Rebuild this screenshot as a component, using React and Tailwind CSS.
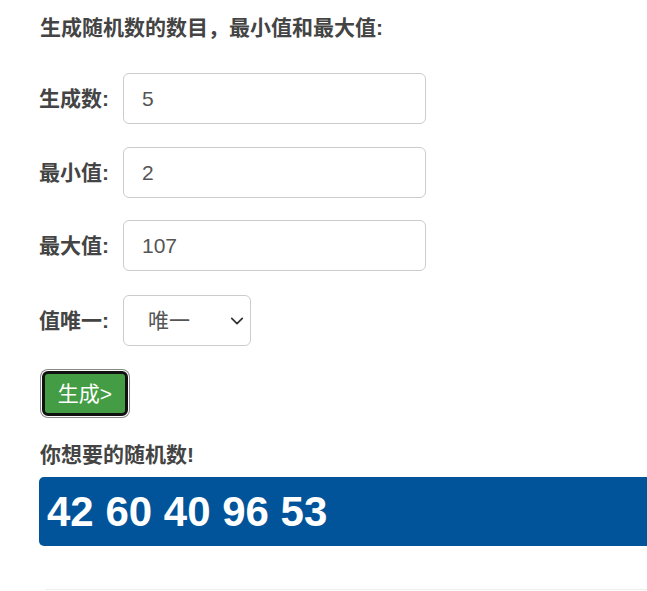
import React from "react";

const ff = { fontFamily: '"Liberation Sans", "Noto Sans CJK SC", sans-serif' };

function Row({ label, children, className = "" }) {
  return (
    <div className={"flex items-center " + className}>
      <label className="w-[84px] shrink-0 text-[21px] font-bold leading-[28px] text-[#444]">{label}</label>
      {children}
    </div>
  );
}

function TextInput({ value }) {
  return (
    <div className="flex h-[51px] w-[303px] items-center rounded-[6px] border border-[#ccc] bg-white px-[18px] text-[21px] text-[#555]">
      {value}
    </div>
  );
}

export default function App() {
  return (
    <div
      className="flex h-[591px] w-[647px] flex-col overflow-hidden bg-white pl-[39px]"
      style={ff}
    >
      <div className="mt-[14px] h-[28px] pl-[1px] text-[21px] font-bold leading-[28px] text-[#444]">
        生成随机数的数目，最小值和最大值:
      </div>

      <Row label="生成数:" className="mt-[31px]">
        <TextInput value="5" />
      </Row>
      <Row label="最小值:" className="mt-[23px]">
        <TextInput value="2" />
      </Row>
      <Row label="最大值:" className="mt-[22px]">
        <TextInput value="107" />
      </Row>
      <Row label="值唯一:" className="mt-[24px]">
        <div className="flex h-[51px] w-[128px] items-center justify-between rounded-[6px] border border-[#ccc] bg-white pl-[24px] pr-[6px] text-[21px] text-[#555]">
          <span>唯一</span>
          <svg width="14" height="14" viewBox="0 0 16 16" fill="none">
            <path d="M2 5l6 6 6-6" stroke="#333" strokeWidth="2" strokeLinecap="round" strokeLinejoin="round" />
          </svg>
        </div>
      </Row>

      <div className="mt-[25px] pl-[3px]">
        <button className="flex h-[45px] w-[86px] items-center justify-center rounded-[6px] border-[3px] border-[#111] bg-[#449d44] text-[21px] text-white shadow-[0_0_0_1px_#fff,0_0_0_2px_#888]">
          生成&gt;
        </button>
      </div>

      <div className="mt-[25px] h-[28px] pl-[1px] text-[21px] font-bold leading-[28px] text-[#444]">
        你想要的随机数!
      </div>

      <div className="mt-[8px] flex h-[69px] items-center rounded-l-[5px] bg-[#02549a] pl-[8px] text-[42px] font-bold text-white">
        42 60 40 96 53
      </div>

      <div className="mt-[43px] ml-[6px] border-t border-[#eee]"></div>
    </div>
  );
}
